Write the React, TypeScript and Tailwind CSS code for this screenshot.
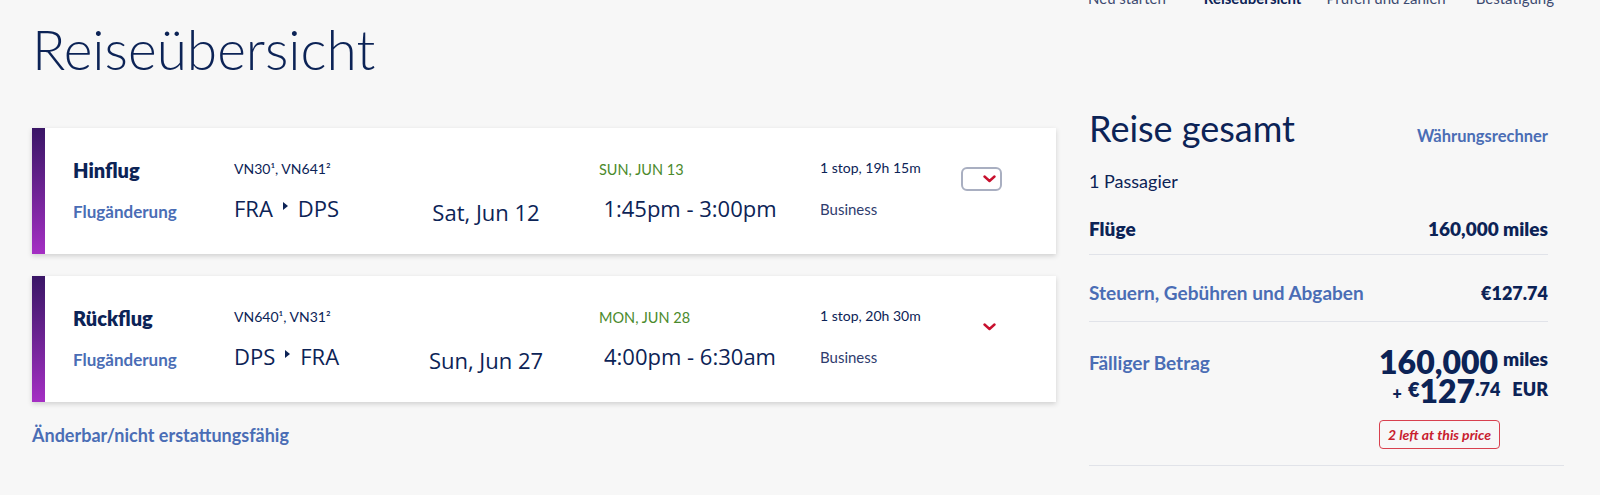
import React from 'react'

interface Flight {
  label: string
  numbers: [string, string]
  from: string
  to: string
  date: string
  arrival: string
  time: string
  duration: string
  cabin: string
  boxed: boolean
}

const flights: Flight[] = [
  {
    label: 'Hinflug',
    numbers: ['VN30', 'VN641'],
    from: 'FRA',
    to: 'DPS',
    date: 'Sat, Jun 12',
    arrival: 'SUN, JUN 13',
    time: '1:45pm - 3:00pm',
    duration: '1 stop, 19h 15m',
    cabin: 'Business',
    boxed: true,
  },
  {
    label: 'Rückflug',
    numbers: ['VN640', 'VN31'],
    from: 'DPS',
    to: 'FRA',
    date: 'Sun, Jun 27',
    arrival: 'MON, JUN 28',
    time: '4:00pm - 6:30am',
    duration: '1 stop, 20h 30m',
    cabin: 'Business',
    boxed: false,
  },
]

function Chevron() {
  return (
    <svg width="13" height="8" viewBox="0 0 13 8" fill="none">
      <polyline points="1.5,1.5 6.5,6 11.5,1.5" stroke="#c8102e" strokeWidth="2.4" strokeLinecap="round" strokeLinejoin="round" />
    </svg>
  )
}

function FlightCard({ flight }: { flight: Flight }) {
  const sans = "font-['Open_Sans',sans-serif]"
  return (
    <div className="flex h-[126px] bg-white shadow-[0_2px_5px_rgba(0,0,0,0.16)]">
      <div className="w-[13px] bg-gradient-to-b from-[#3a1666] to-[#a52fc4]" />
      <div className="flex pl-[28px]">
        {/* label + change link */}
        <div className="flex w-[161px] flex-col gap-[14px] pt-[28px]">
          <div className="flex h-[28px] items-center text-[20px] font-extrabold text-[#0c2356]">{flight.label}</div>
          <div className="flex h-[28px] items-center text-[17px] font-bold text-[#4a6db5]">Flugänderung</div>
        </div>
        {/* flight numbers + route */}
        <div className="flex w-[178px] flex-col gap-[12px] pt-[26px]">
          <div className="flex h-[28px] items-center text-[14px] text-[#0c2356]">
            {flight.numbers[0]}¹, {flight.numbers[1]}²
          </div>
          <div className={`flex h-[28px] items-center text-[22px] text-[#0c2356] ${sans}`}>
            <span>{flight.from}</span>
            <svg width="5" height="8" viewBox="0 0 5 8" className="mx-[10px] -mt-[5px]">
              <polygon points="0,0 5,4 0,8" fill="#0c2356" />
            </svg>
            <span>{flight.to}</span>
          </div>
        </div>
        {/* departure date */}
        <div className="flex w-[148px] flex-col gap-[14px] pt-[28px]">
          <div className="h-[28px]" />
          <div className={`flex h-[28px] items-center justify-center text-[22px] text-[#0c2356] ${sans}`}>{flight.date}</div>
        </div>
        {/* arrival + times */}
        <div className="ml-[39px] flex w-[182px] flex-col gap-[10px] pt-[28px]">
          <div className="flex h-[28px] items-center text-[14.5px] text-[#4b8a2c]">{flight.arrival}</div>
          <div className={`flex h-[28px] items-center justify-center text-[22px] text-[#0c2356] ${sans}`}>{flight.time}</div>
        </div>
        {/* stops + cabin */}
        <div className="ml-[39px] flex w-[141px] flex-col gap-[14px] pt-[25px]">
          <div className="flex h-[28px] items-center text-[14px] text-[#0c2356]">{flight.duration}</div>
          <div className="flex h-[28px] items-center text-[15px] text-[#2f3c6e]">{flight.cabin}</div>
        </div>
        <div className="pt-[39px]">
          <div
            className={`flex h-[24px] w-[41px] items-center justify-end rounded-[6px] border-2 pr-[4px] ${
              flight.boxed ? 'border-[#a9afc1]' : 'border-transparent'
            }`}
          >
            <Chevron />
          </div>
        </div>
      </div>
    </div>
  )
}

export default function App() {
  return (
    <div className="min-h-screen overflow-hidden bg-[#f7f7f7] font-['Lato',sans-serif] text-[#0c2356]">
      <nav className="-mt-[12px] flex h-[20px] justify-end pr-[46px] text-[15px] leading-[20px] text-[#3c4a70]">
        <span>Neu starten</span>
        <span className="ml-[38px] font-bold text-[#0c2356]">Reiseübersicht</span>
        <span className="ml-[25px]">Prüfen und zahlen</span>
        <span className="ml-[30px]">Bestätigung</span>
      </nav>

      <h1 className="mt-[13px] pl-[32px] text-[55px] font-light leading-[56px] text-[#0c2356]">Reiseübersicht</h1>

      <div className="mt-[29px] flex pl-[32px]">
        <div className="w-[1024px] pt-[22px]">
          <div className="flex flex-col gap-[22px]">
            {flights.map((f) => (
              <FlightCard key={f.label} flight={f} />
            ))}
          </div>
          <div className="mt-[21px] text-[18px] font-bold leading-[24px] text-[#4a6db5]">Änderbar/nicht erstattungsfähig</div>
        </div>

        <div className="ml-[33px] w-[475px]">
          <div className="flex h-[44px] w-[459px] items-baseline justify-between">
            <span className="text-[36px] leading-[44px]">Reise gesamt</span>
            <span className="text-[16.5px] font-bold text-[#4a6db5]">Währungsrechner</span>
          </div>
          <div className="mt-[19px] text-[18px] leading-[24px]">1 Passagier</div>

          <div className="mt-[24px] flex w-[459px] justify-between border-b border-[#e1e3e9] pb-[13px] text-[19px] font-extrabold leading-[24px]">
            <span>Flüge</span>
            <span>160,000 miles</span>
          </div>
          <div className="flex w-[459px] justify-between border-b border-[#e1e3e9] pb-[16px] pt-[26px] font-bold leading-[24px]">
            <span className="text-[19px] text-[#4a6db5]">Steuern, Gebühren und Abgaben</span>
            <span className="text-[18px] font-extrabold">€127.74</span>
          </div>
          <div className="flex items-start justify-between border-b border-[#e1e3e9] pb-[16px] pt-[25px]">
            <span className="mt-[4px] text-[19px] font-bold leading-[24px] text-[#4a6db5]">Fälliger Betrag</span>
            <div className="mr-[16px] flex flex-col items-end font-extrabold">
              <div className="flex h-[30px] items-start">
                <span className="text-[32px] leading-[30px]">160,000</span>
                <span className="ml-[5px] text-[19px] leading-[24px]">miles</span>
              </div>
              <div className="flex h-[28px] items-start">
                <span className="mr-[6px] mt-[5px] text-[16px] leading-[22px]">+</span>
                <span className="text-[20px] leading-[24px]">€</span>
                <span className="text-[32px] leading-[28px]">127</span>
                <span className="text-[18px] leading-[24px]">.74</span>
                <span className="ml-[12px] text-[18px] leading-[24px]">EUR</span>
              </div>
              <div className="mt-[15px] flex h-[29px] items-center self-start rounded-[4px] border border-[#d8404e] px-[8px] text-[14px] font-bold italic text-[#c8202e]">
                2 left at this price
              </div>
            </div>
          </div>
        </div>
      </div>
    </div>
  )
}
